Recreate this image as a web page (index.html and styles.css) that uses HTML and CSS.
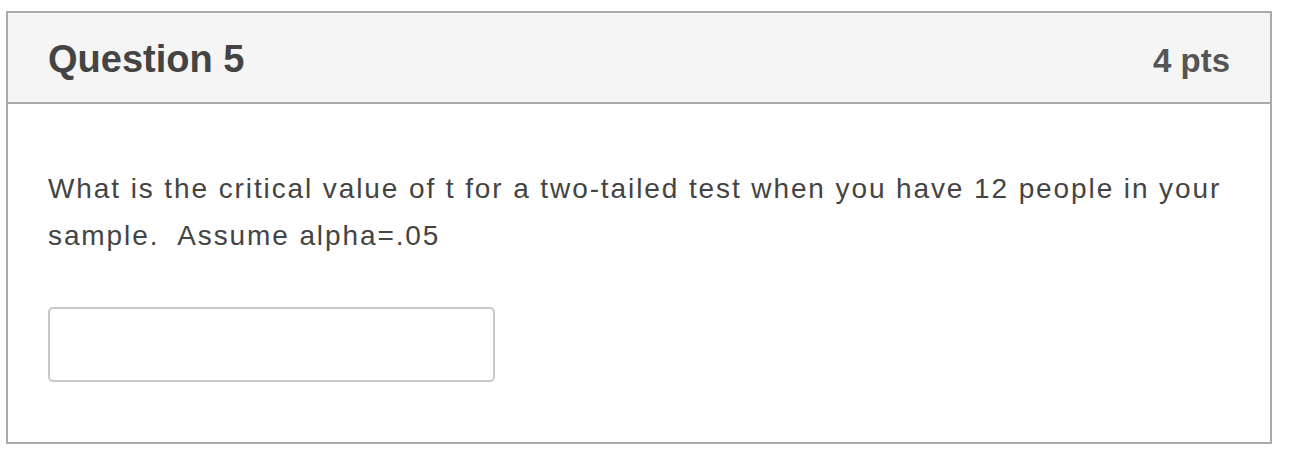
FILE: index.html
```html
<!DOCTYPE html>
<html>
<head>
<meta charset="utf-8">
<link rel="stylesheet" href="styles.css">
</head>
<body>
<div class="card">
  <div class="header">
    <h2 class="title">Question 5</h2>
    <span class="pts">4 pts</span>
  </div>
  <div class="content">
    <p class="text">What is the critical value of t for a two-tailed test when you have 12 people in your sample.&nbsp; Assume alpha=.05</p>
    <input class="answer" type="text">
  </div>
</div>
</body>
</html>
```
FILE: styles.css
```css
html, body {
  margin: 0;
  padding: 0;
  background: #fff;
}
body {
  padding: 11px 0 0 6px;
  font-family: "Liberation Sans", Arial, sans-serif;
}
.card {
  width: 1262px;
  border: 2px solid #aaaaaa;
}
.header {
  height: 91px;
  background: #f5f5f5;
  border-bottom: 2px solid #aaaaaa;
  display: flex;
  align-items: baseline;
  justify-content: space-between;
  padding: 24px 40px 0 40px;
  box-sizing: border-box;
}
.title {
  margin: 0;
  font-size: 38px;
  line-height: 44px;
  font-weight: bold;
  color: #444444;
}
.pts {
  font-size: 33px;
  line-height: 44px;
  font-weight: bold;
  color: #555555;
}
.content {
  padding: 61px 40px 60px 40px;
}
.text {
  margin: 0;
  font-size: 28px;
  letter-spacing: 1.9px;
  line-height: 47px;
  color: #444444;
}
.answer {
  display: block;
  margin-top: 48px;
  width: 447px;
  height: 75px;
  box-sizing: border-box;
  border: 2px solid #c8c8c8;
  border-radius: 5px;
  background: #fff;
  outline: none;
}
```
